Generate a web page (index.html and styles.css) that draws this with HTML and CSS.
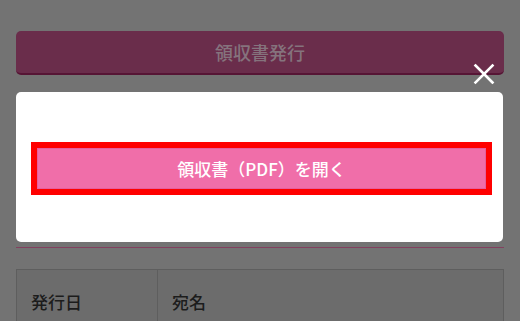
FILE: index.html
```html
<!DOCTYPE html>
<html lang="ja">
<head>
  <meta charset="UTF-8">
  <title>領収書発行</title>
  <meta name="viewport" content="width=device-width, initial-scale=1.0">
  <link rel="stylesheet" href="styles.css">
</head>
<body>

<div class="page">
  <button class="issue-button">領収書発行</button>
  <p class="note">
    <span>領収書の宛名</span>
    <span>発行日をご確認ください。</span>
  </p>
  <div class="divider"></div>
  <table class="receipt-table">
    <tr>
      <th>発行日</th>
      <th>宛名</th>
    </tr>
  </table>
</div>

<!-- Modal -->
<div class="modal">
  <button class="close" aria-label="閉じる">
    <svg width="22" height="22" viewBox="0 0 22 22">
      <path d="M2.5 2.5 L19.5 19.5 M19.5 2.5 L2.5 19.5" stroke="#fff" stroke-width="2.6" stroke-linecap="square"/>
    </svg>
  </button>
  <div class="modal-body">
    <a class="open-pdf" href="#">領収書（PDF）を開く</a>
  </div>
</div>

</body>
</html>
```

FILE: styles.css
```css
body {
  margin: 0;
  background-color: #737373;
  font-family: "Noto Sans CJK JP", "Noto Sans", sans-serif;
}

.page {
  padding: 31px 16px 0 16px;
  position: relative;
}

.issue-button {
  display: block;
  width: 100%;
  height: 44px;
  background-color: #6a2d4b;
  color: #85737d;
  font-family: inherit;
  font-size: 18px;
  font-weight: 500;
  border: none;
  border-bottom: 2px solid #561535;
  border-radius: 5px;
  cursor: pointer;
}

.note {
  margin: 13px 0 0 0;
  padding-left: 20px;
  font-size: 14px;
  line-height: 20px;
  color: #2b2b2b;
  display: flex;
}

.note span:first-child {
  width: 119px;
}

.divider {
  height: 1px;
  background-color: #83405f;
  margin-top: 139px;
}

.receipt-table {
  width: 100%;
  border-collapse: collapse;
  margin-top: 21px;
}

.receipt-table th {
  text-align: left;
  font-weight: 500;
  font-size: 17px;
  color: #1c1c1c;
  background-color: #6c6c6c;
  border: 1px solid #5e5e5e;
  padding: 16px 14px;
  height: 30px;
}

.receipt-table th:first-child {
  width: 112px;
}

/* modal lies over the page */
.modal {
  position: absolute;
  top: 92px;
  left: 16px;
  right: 17px;
  height: 150px;
  background: #fff;
  border-radius: 5px;
}

.close {
  position: absolute;
  top: -29px;
  right: 8px;
  background: none;
  border: none;
  padding: 0;
  cursor: pointer;
}

.close svg {
  display: block;
}

.modal-body {
  padding: 50px 11px 0 15px;
}

.open-pdf {
  display: block;
  height: 39px;
  line-height: 39px;
  text-align: center;
  background-color: #f06ea9;
  border: 1px solid #e55f9d;
  outline: 6px solid #ff0000;
  margin: 6px;
  color: #fff;
  font-size: 17px;
  font-weight: 500;
  text-decoration: none;
}
```
